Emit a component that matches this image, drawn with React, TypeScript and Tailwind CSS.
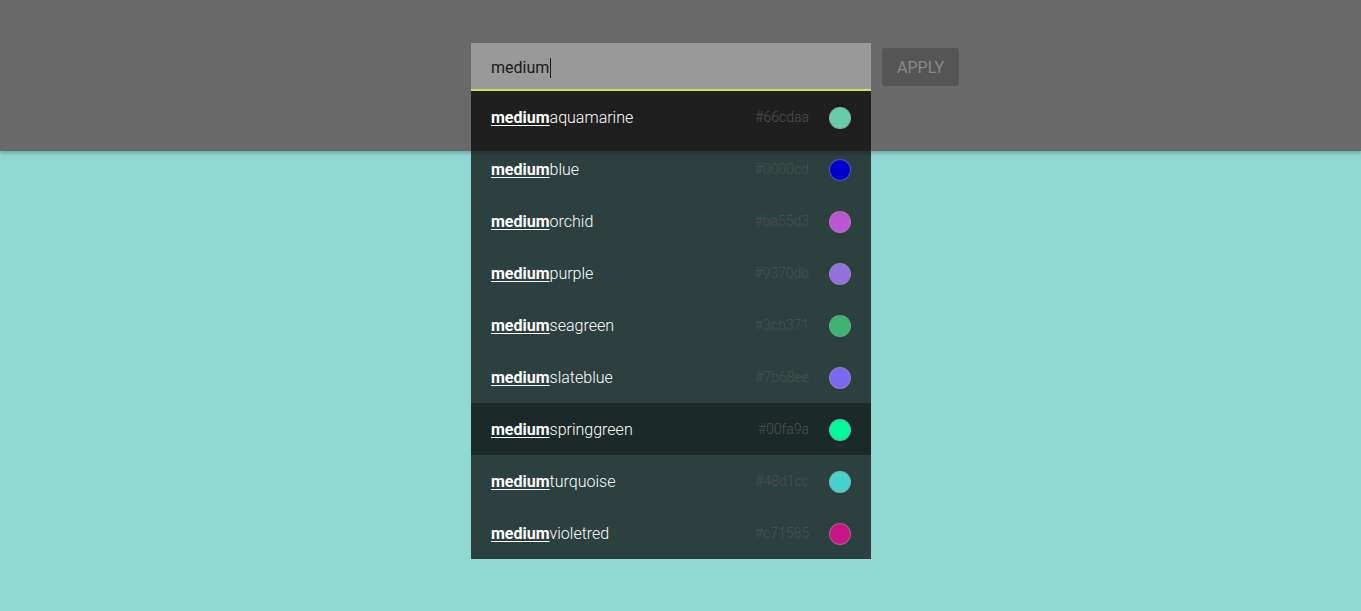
const colors = [
  { name: "aquamarine", hex: "#66cdaa" },
  { name: "blue", hex: "#0000cd" },
  { name: "orchid", hex: "#ba55d3" },
  { name: "purple", hex: "#9370db" },
  { name: "seagreen", hex: "#3cb371" },
  { name: "slateblue", hex: "#7b68ee" },
  { name: "springgreen", hex: "#00fa9a" },
  { name: "turquoise", hex: "#48d1cc" },
  { name: "violetred", hex: "#c71585" },
];

export default function App() {
  const active = "springgreen";

  return (
    <div className="min-h-screen bg-[#91d8d3] font-['Roboto',sans-serif]">
      <header className="h-[151px] bg-[#696969] shadow-[0_2px_4px_rgba(0,0,0,0.25)]">
        <div className="flex justify-center pt-[43px] pl-[69px]">
          {/* Search field + suggestions */}
          <div className="relative w-[400px]">
            <div className="h-[48px] bg-[#999999] border-b-2 border-[#d4e157] px-5 pt-[3px] flex items-center">
              <span className="text-[16px] text-[#1a1a1a]">medium</span>
              <span className="w-px h-[20px] bg-[#1a1a1a] ml-px" />
            </div>
            <ul className="absolute left-0 top-[48px] w-full bg-black/70 z-10">
              {colors.map((c) => (
                <li
                  key={c.name}
                  className={`h-[52px] px-5 pt-px flex items-center ${
                    c.name === active ? "bg-black/35" : ""
                  }`}
                >
                  <span className="flex-1 text-[16px] font-light text-white">
                    <b className="font-bold underline underline-offset-2">medium</b>
                    {c.name}
                  </span>
                  <span className="text-[14px] font-light text-[#4f4f4f] mr-5">{c.hex}</span>
                  <span
                    className="w-[22px] h-[22px] rounded-full border border-[#9a9a9a]/50"
                    style={{ backgroundColor: c.hex }}
                  />
                </li>
              ))}
            </ul>
          </div>

          <button className="ml-[11px] mt-[5px] h-[38px] px-[15px] pt-[2px] rounded-[3px] bg-[#555555] text-[#888888] text-[16px] uppercase">
            Apply
          </button>
        </div>
      </header>
    </div>
  );
}
